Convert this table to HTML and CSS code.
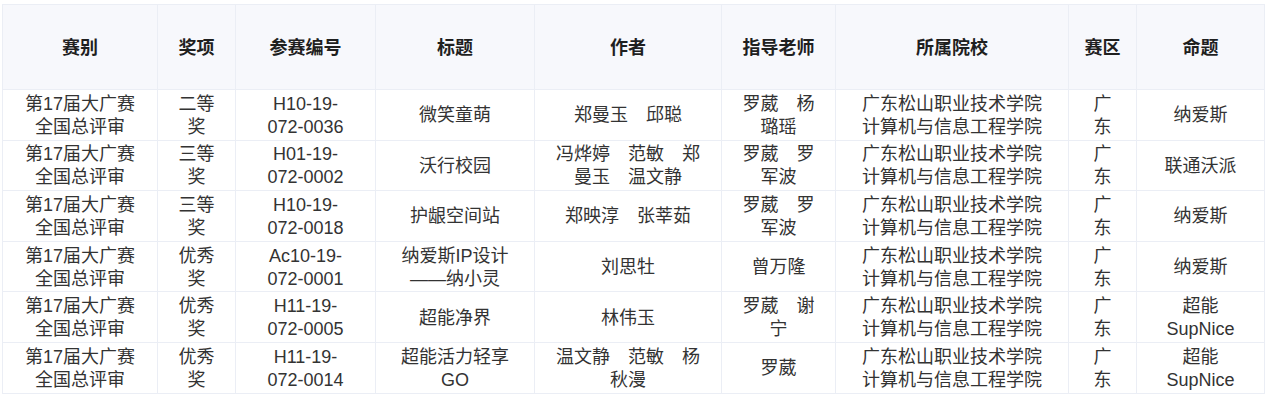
FILE: index.html
```html
<!DOCTYPE html>
<html lang="zh-CN">
<head>
<meta charset="utf-8">
<title>获奖名单</title>
<link rel="stylesheet" href="styles.css">
</head>
<body>
<div class="wrap">
<table class="awards">
<colgroup>
<col class="c1"><col class="c2"><col class="c3"><col class="c4"><col class="c5"><col class="c6"><col class="c7"><col class="c8"><col class="c9">
</colgroup>
<thead>
<tr><th>赛别</th><th>奖项</th><th>参赛编号</th><th>标题</th><th>作者</th><th>指导老师</th><th>所属院校</th><th>赛区</th><th>命题</th></tr>
</thead>
<tbody>
<tr><td>第17届大广赛全国总评审</td><td>二等奖</td><td>H10-19-072-0036</td><td>微笑童萌</td><td>郑曼玉　邱聪</td><td>罗葳　杨璐瑶</td><td>广东松山职业技术学院计算机与信息工程学院</td><td>广东</td><td>纳爱斯</td></tr>
<tr><td>第17届大广赛全国总评审</td><td>三等奖</td><td>H01-19-072-0002</td><td>沃行校园</td><td>冯烨婷　范敏　郑曼玉　温文静</td><td>罗葳　罗军波</td><td>广东松山职业技术学院计算机与信息工程学院</td><td>广东</td><td>联通沃派</td></tr>
<tr><td>第17届大广赛全国总评审</td><td>三等奖</td><td>H10-19-072-0018</td><td>护龈空间站</td><td>郑映淳　张莘茹</td><td>罗葳　罗军波</td><td>广东松山职业技术学院计算机与信息工程学院</td><td>广东</td><td>纳爱斯</td></tr>
<tr><td>第17届大广赛全国总评审</td><td>优秀奖</td><td>Ac10-19-072-0001</td><td>纳爱斯IP设计——纳小灵</td><td>刘思牡</td><td>曾万隆</td><td>广东松山职业技术学院计算机与信息工程学院</td><td>广东</td><td>纳爱斯</td></tr>
<tr><td>第17届大广赛全国总评审</td><td>优秀奖</td><td>H11-19-072-0005</td><td>超能净界</td><td>林伟玉</td><td>罗葳　谢宁</td><td>广东松山职业技术学院计算机与信息工程学院</td><td>广东</td><td>超能SupNice</td></tr>
<tr><td>第17届大广赛全国总评审</td><td>优秀奖</td><td>H11-19-072-0014</td><td>超能活力轻享GO</td><td>温文静　范敏　杨秋漫</td><td>罗葳</td><td>广东松山职业技术学院计算机与信息工程学院</td><td>广东</td><td>超能SupNice</td></tr>
</tbody>
</table>
</div>
</body>
</html>
```
FILE: styles.css
```css
html, body {
  margin: 0;
  padding: 0;
  background: #ffffff;
}
.wrap {
  padding: 4px 3px 0 2px;
}
.awards {
  width: 1262px;
  table-layout: fixed;
  border-collapse: collapse;
  font-family: "Liberation Sans", "Noto Sans CJK SC", sans-serif;
  font-size: 18px;
  color: #333333;
}
.c1 { width: 155px; }
.c2 { width: 78px; }
.c3 { width: 140px; }
.c4 { width: 159px; }
.c5 { width: 187px; }
.c6 { width: 114px; }
.c7 { width: 233px; }
.c8 { width: 68px; }
.c9 { width: 128px; }
.awards th,
.awards td {
  border: 1px solid #ebeef5;
  text-align: center;
  vertical-align: middle;
  padding: 2.8px 20px 0.8px;
  line-height: 23px;
}
.awards th {
  background: #f7f8fc;
  font-weight: bold;
  color: #1f1f1f;
  height: 85px;
  padding: 3px 4px 0;
  white-space: nowrap;
  box-sizing: border-box;
}
```
